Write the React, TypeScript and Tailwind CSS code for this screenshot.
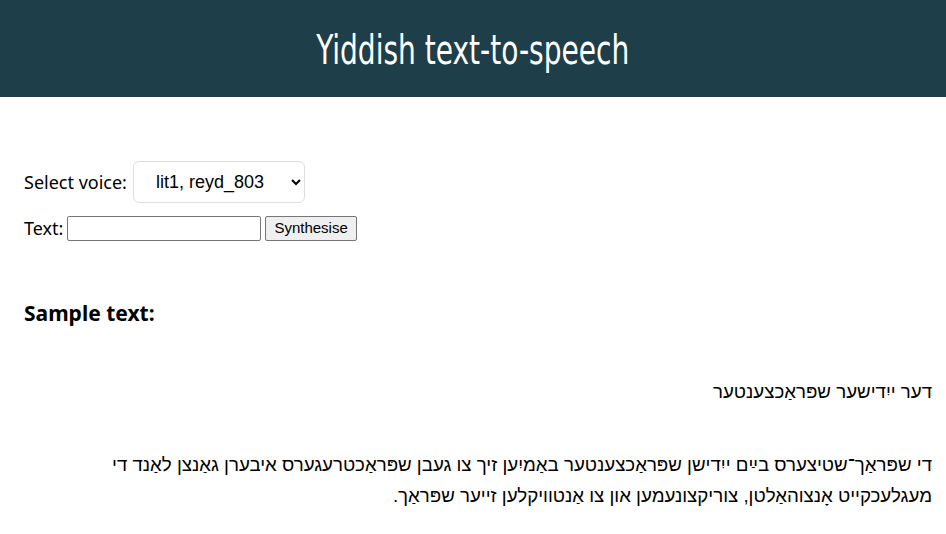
export default function App() {
  return (
    <div className="min-h-screen bg-white text-black">
      <header className="h-[97px] bg-[#1e3f4a] flex items-center justify-center">
        <h1 className="text-white text-[40px] font-['DejaVu_Sans',sans-serif] font-stretch-condensed scale-x-[0.78] mt-[3px]">
          Yiddish text-to-speech
        </h1>
      </header>
      <main className="px-6 font-['Source_Sans_Pro','Noto_Sans',sans-serif] text-[18px]">
        <div className="mt-[64px] flex items-center">
          <label className="mr-[6px]">Select voice:</label>
          <select className="h-[42px] w-[172px] rounded-[6px] border border-[#dddddd] bg-white pl-[18px] pr-[10px] text-[18px] font-['Liberation_Sans',Arial,sans-serif]">
            <option>lit1, reyd_803</option>
          </select>
        </div>
        <div className="mt-[12px] flex items-center">
          <label className="mr-[4px]">Text:</label>
          <input className="h-[25px] w-[194px] border border-[#767676] rounded-[2px] text-[14px]" />
          <button className="ml-[4px] h-[25px] px-[8px] border border-[#767676] bg-[#efefef] rounded-[2px] text-[15px] font-['Liberation_Sans',Arial,sans-serif]">
            Synthesise
          </button>
        </div>
        <h2 className="mt-[56px] text-[21px] font-bold">Sample text:</h2>
        <div dir="rtl" className="font-['Liberation_Sans',Arial,sans-serif] text-[18.7px] leading-[31px] mr-[-10px]">
          <p className="mt-[46px]">דער ייִדישער שפּראַכצענטער</p>
          <p className="mt-[42px] max-w-[830px]">
            די שפּראַך־שטיצערס בײַם ייִדישן שפּראַכצענטער באַמיִען זיך צו געבן שפּראַכטרעגערס איבערן גאַנצן לאַנד די מעגלעכקייט אָנצוהאַלטן, צוריקצונעמען און צו אַנטוויקלען זייער שפּראַך.
          </p>
        </div>
      </main>
    </div>
  );
}
